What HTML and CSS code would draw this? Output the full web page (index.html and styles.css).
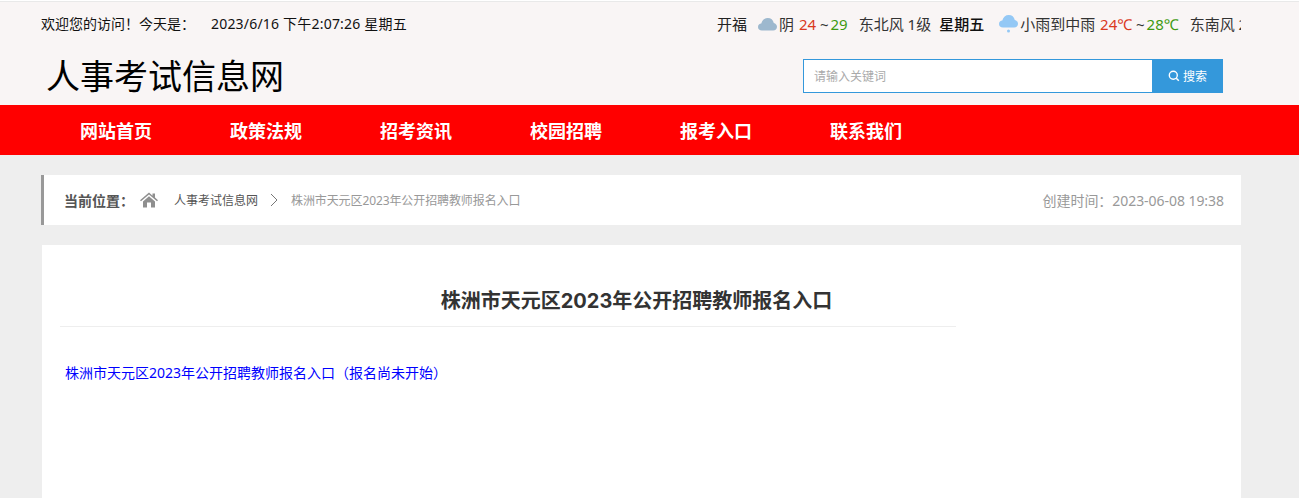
FILE: index.html
```html
<!DOCTYPE html>
<html lang="zh-CN">
<head>
<meta charset="utf-8">
<title>株洲市天元区2023年公开招聘教师报名入口</title>
<link rel="stylesheet" href="styles.css">
</head>
<body>
<header class="header">
  <div class="topbar">
    <div class="welcome"><span>欢迎您的访问！今天是：</span><span class="clock">2023/6/16 下午2:07:26 星期五</span></div>
    <div class="weather">
      <span class="city">开福</span>
      <svg class="wicon" viewBox="0 0 20 20"><path fill="#9db8ce" d="M4.500 16.500C2 16.500.5 15 .5 13c0-1.900 1.500-3.300 3.300-3.400C4.700 6 7 4 10.300 4c3.100 0 5.400 2 6 4.900 1.900.4 3.200 2 3.200 3.900 0 2.100-1.600 3.700-3.800 3.700z"/></svg>
      <span>阴 <em class="hot">24</em> ~ <em class="cold">29</em></span>
      <span class="wind">东北风 1级</span>
      <b class="day">星期五</b>
      <svg class="wicon rain" viewBox="0 0 20 20"><path fill="#94c8f5" d="M4.500 13.500C2 13.500.5 12 .5 10c0-1.900 1.500-3.300 3.300-3.400C4.700 3 7 1 10.300 1c3.100 0 5.400 2 6 4.900 1.900.4 3.200 2 3.200 3.900 0 2.100-1.600 3.700-3.800 3.700z"/><circle fill="#94c8f5" cx="10" cy="17" r="1.500"/></svg>
      <span>小雨到中雨 <em class="hot">24℃</em> ~ <em class="cold">28℃</em></span>
      <span class="wind">东南风 2级</span>
    </div>
  </div>
  <div class="brand-row">
    <h1 class="logo">人事考试信息网</h1>
    <form class="search">
      <input class="search-input" type="text" placeholder="请输入关键词">
      <button class="search-btn" type="button">
        <svg class="search-icon" viewBox="0 0 12 12"><circle cx="5.300" cy="5.300" r="4" fill="none" stroke="#fff" stroke-width="1.400"/><path d="M8.300 8.300l2.500 2.500" stroke="#fff" stroke-width="1.500"/></svg>搜索
      </button>
    </form>
  </div>
</header>
<nav class="nav">
  <a href="#">网站首页</a>
  <a href="#">政策法规</a>
  <a href="#">招考资讯</a>
  <a href="#">校园招聘</a>
  <a href="#">报考入口</a>
  <a href="#">联系我们</a>
</nav>
<main class="wrap">
  <div class="crumbs">
    <b class="crumb-label">当前位置：</b>
    <svg class="home" viewBox="0 0 18 16"><path fill="#8f8f8f" d="M9 .5L0 8.200l1 1.100L9 2.600l8 6.700 1-1.100-3-2.600V1.500h-2.500v2.300z"/><path fill="#8f8f8f" d="M3 9.500L9 4.300l6 5.200V15.500h-4v-5H7v5H3z"/></svg>
    <a class="crumb-link" href="#">人事考试信息网</a>
    <svg class="chev" viewBox="0 0 8 14"><path d="M1 1l6 6-6 6" fill="none" stroke="#777" stroke-width="1"/></svg>
    <span class="crumb-current">株洲市天元区2023年公开招聘教师报名入口</span>
    <span class="created">创建时间：2023-06-08 19:38</span>
  </div>
  <article class="article">
    <div class="article-main">
      <h2 class="title">株洲市天元区2023年公开招聘教师报名入口</h2>
      <p class="body"><a href="#">株洲市天元区2023年公开招聘教师报名入口（报名尚未开始）</a></p>
    </div>
  </article>
</main>
</body>
</html>
```
FILE: styles.css
```css
* { box-sizing: border-box; }
html, body { margin: 0; height: 100%; overflow: hidden; }
body {
  background: #eee;
  font-family: "Noto Sans", "Noto Sans CJK SC", sans-serif;
  color: #333;
  font-size: 14px;
}
a { color: inherit; text-decoration: none; }
em { font-style: normal; }

.header {
  height: 105px;
  background: linear-gradient(#fff 1px, #e9e9e9 1px, #e9e9e9 2px, #f9f5f5 2px);
  padding: 2px 58px 0 41px;
}
.topbar {
  height: 44px;
  display: flex;
  justify-content: space-between;
  align-items: center;
}
.welcome { color: #111; white-space: nowrap; line-height: 44px; }
.clock { margin-left: 16px; letter-spacing: .2px; }
.weather {
  width: 524px;
  overflow: hidden;
  white-space: nowrap;
  display: flex;
  align-items: center;
  color: #333;
  font-size: 15px;
  line-height: 44px;
  flex: none;
}
.weather > * { flex: none; }
.city { color: #222; margin-right: 10px; }
.wicon { width: 21px; height: 20px; margin-right: 1px; }
.rain { margin-left: 14px; }
.hot { color: #d9391e; margin-left: 1px; }
.cold { color: #3f9a12; margin-left: -2px; }
.wind { margin-left: 11px; }
.day { color: #111; margin-left: 8px; font-weight: 500; }

.brand-row {
  height: 59px;
  display: flex;
  justify-content: space-between;
  align-items: flex-start;
  padding-left: 5px;
}
.logo {
  margin: 5px 0 0;
  font-size: 34px;
  font-weight: 400;
  line-height: 50px;
  color: #000;
}
.search { display: flex; height: 34px; margin: 13px 18px 0 0; width: 420px; flex: none; }
.search-input {
  width: 349px;
  height: 34px;
  border: 1px solid #3498db;
  border-right: 0;
  background: #fff;
  padding: 0 10px;
  font: 12px "Noto Sans", "Noto Sans CJK SC", sans-serif;
  outline: none;
}
.search-input::placeholder { color: #aaa; opacity: 1; }
.search-btn {
  width: 71px;
  height: 34px;
  border: 0;
  padding: 0;
  background: #3498db;
  color: #fff;
  font: 12px "Noto Sans", "Noto Sans CJK SC", sans-serif;
  display: flex;
  align-items: center;
  justify-content: center;
  gap: 3px;
}
.search-icon { width: 12px; height: 12px; }

.nav {
  height: 50px;
  background: #f00;
  display: flex;
  padding-left: 41px;
}
.nav a {
  width: 150px;
  text-align: center;
  color: #fff;
  font-size: 18px;
  font-weight: 700;
  line-height: 52px;
}

.wrap { width: 1199px; margin: 20px 0 0 42px; }
.crumbs {
  height: 50px;
  background: #fff;
  border-left: 3px solid #999;
  margin-left: -1px;
  display: flex;
  align-items: center;
  padding: 0 17px 0 20px;
  font-size: 12px;
  color: #555;
}
.crumb-label { font-size: 14px; color: #555; }
.home { width: 18px; height: 16px; margin: 0 16px 0 6px; }
.crumb-link { color: #555; }
.chev { width: 8px; height: 14px; margin: 0 13px 0 12px; }
.crumb-current { color: #999; letter-spacing: -.1px; }
.created { margin-left: auto; font-size: 14px; color: #999; letter-spacing: -.05px; }

.article {
  margin-top: 20px;
  height: 253px;
  background: #fff;
  padding: 0 285px 0 18px;
}
.title {
  margin: 0;
  height: 82px;
  padding-left: 257px;
  border-bottom: 1px solid #eee;
  text-align: center;
  font-family: Inter, "Noto Sans CJK SC", sans-serif;
  font-size: 20px;
  font-weight: 700;
  color: #333;
  line-height: 112px;
}
.body {
  margin: 26px 0 0 5px;
  font-size: 14px;
  line-height: 40px;
}
.body a { color: #00f; }
```
